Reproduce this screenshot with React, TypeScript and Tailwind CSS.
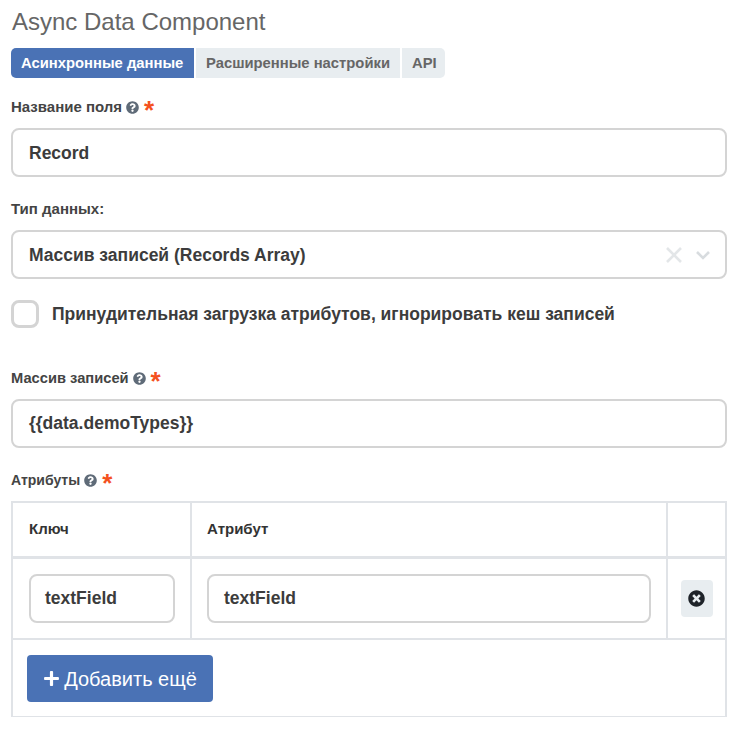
import React from "react";
import { FaQuestionCircle, FaTimesCircle, FaPlus } from "react-icons/fa";

function Star() {
  return <span className="ml-[5px] relative -top-[3px] text-[26px] leading-none font-bold text-[#f4511e] h-[14px]">*</span>;
}

function Label({ text, help = true, star = true, cls = "" }: { text: string; help?: boolean; star?: boolean; cls?: string }) {
  return (
    <div className={"flex items-center leading-[20px] font-bold text-[#444] " + cls}>
      <span>{text}</span>
      {help && <FaQuestionCircle className="ml-[4px] text-[#5f6b78]" size={13} />}
      {star && <Star />}
    </div>
  );
}

function Field({ value, cls = "pl-4" }: { value: string; cls?: string }) {
  return (
    <div className={"flex items-center h-[49px] border-2 border-[#d4d4d4] rounded-lg bg-white text-[17.5px] font-bold text-[#3c3c3c] " + cls}>
      {value}
    </div>
  );
}

export default function App() {
  return (
    <div className="w-[740px] h-[742px] bg-white overflow-hidden pl-[11px] pr-[13px] pt-[8px] font-['Liberation_Sans',Arial,sans-serif]">
      <h1 className="text-[24px] leading-[28px] font-normal text-[#666] ml-px">Async Data Component</h1>

      <div className="flex gap-[2px] mt-[12px] h-[30px] text-[14.8px] font-bold">
        <div className="flex items-center px-[10px] w-[183px] whitespace-nowrap bg-[#4a72b5] text-white rounded-l-[5px]">Асинхронные данные</div>
        <div className="flex items-center px-[10px] w-[204px] whitespace-nowrap bg-[#e8edf0] text-[#666]">Расширенные настройки</div>
        <div className="flex items-center px-[10px] w-[43px] bg-[#e8edf0] text-[#666] rounded-r-[5px]">API</div>
      </div>

      <Label text="Название поля" cls="mt-[19px] text-[15px]" />
      <Field value="Record" cls="mt-[11px] pl-4 pt-px" />

      <Label text="Тип данных:" help={false} star={false} cls="mt-[22px] text-[15px]" />
      <div className="flex items-center justify-between h-[49px] mt-[11px] border-2 border-[#d4d4d4] rounded-lg bg-white pl-4 pr-[14px] pt-px text-[17.5px] font-bold text-[#3c3c3c]">
        <span>Массив записей (Records Array)</span>
        <span className="flex items-center gap-[12px]">
          <svg width="18" height="18" viewBox="0 0 18 18" fill="none" stroke="#e3e6e8" strokeWidth="2.6">
            <path d="M2 2 L16 16 M16 2 L2 16" />
          </svg>
          <svg width="16" height="10" viewBox="0 0 16 10" fill="none" stroke="#d8dcdf" strokeWidth="2.6">
            <path d="M2 2 L8 8 L14 2" />
          </svg>
        </span>
      </div>

      <div className="flex items-center mt-[18px] h-[34px]">
        <div className="w-[28px] h-[28px] border-[3px] border-[#d4d4d4] rounded-lg bg-white" />
        <span className="ml-[13px] text-[17.5px] font-bold text-[#3c3c3c]">Принудительная загрузка атрибутов, игнорировать кеш записей</span>
      </div>

      <Label text="Массив записей" cls="mt-[37px] text-[14.7px]" />
      <Field value="{{data.demoTypes}}" cls="mt-[11px] pl-4" />

      <Label text="Атрибуты" cls="mt-[22px] text-[14px]" />

      <div className="mt-[11px] border-2 border-b border-[#e0e3e7] h-[216px]">
        <div className="flex h-[56px] border-b-[3px] border-[#e0e3e7] text-[15px] font-bold text-[#333]">
          <div className="flex items-center w-[179px] pl-[16px] border-r-2 border-[#e0e3e7]">Ключ</div>
          <div className="flex items-center w-[476px] pl-[15px] border-r-2 border-[#e0e3e7]">Атрибут</div>
          <div className="flex-1" />
        </div>
        <div className="flex h-[81px] border-b-2 border-[#e0e3e7]">
          <div className="flex items-center w-[179px] pl-[16px] pr-[15px] border-r-2 border-[#e0e3e7]">
            <Field value="textField" cls="w-full pl-[14px]" />
          </div>
          <div className="flex items-center w-[476px] px-[15px] border-r-2 border-[#e0e3e7]">
            <Field value="textField" cls="w-full pl-[15px]" />
          </div>
          <div className="flex flex-1 items-center justify-center">
            <div className="flex items-center justify-center w-[32px] h-[37px] rounded-[4px] bg-[#e8edf0]">
              <FaTimesCircle className="text-[#1e2329]" size={17} />
            </div>
          </div>
        </div>
        <div className="pl-[14px] pt-[15px]">
          <div className="flex items-center justify-center gap-[4px] w-[186px] h-[47px] rounded-[4px] bg-[#4a72b5] text-white text-[20px]">
            <FaPlus size={17} />
            <span>Добавить ещё</span>
          </div>
        </div>
      </div>
    </div>
  );
}
